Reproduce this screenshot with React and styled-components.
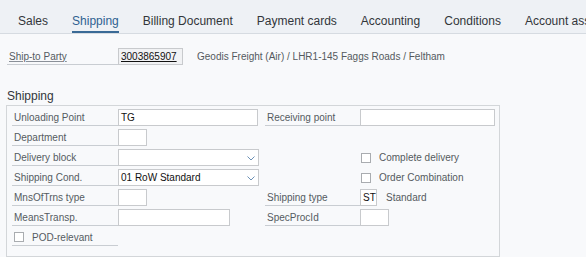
import React from 'react'
import styled, { createGlobalStyle } from 'styled-components'

const GlobalStyle = createGlobalStyle`
  body {
    margin: 0;
    background: #f8f9fb;
    font-family: "Liberation Sans", Arial, sans-serif;
  }
`;

const Page = styled.div`
  width: 586px;
  height: 257px;
  overflow: hidden;
  background: #f8f9fb;
`;

const TabBar = styled.div`
  display: flex;
  gap: 24px;
  height: 34px;
  box-sizing: border-box;
  padding-left: 18px;
  background: #eef1f5;
  border-bottom: 1px solid #d6dbe1;
  white-space: nowrap;
`;

const Tab = styled.div`
  box-sizing: border-box;
  height: 33px;
  padding-top: 14px;
  font-size: 12px;
  line-height: 14px;
  color: ${p => (p.active ? '#2f6191' : '#32363a')};
  border-bottom: 2px solid ${p => (p.active ? '#3a6a96' : 'transparent')};
`;

const ShipToRow = styled.div`
  display: flex;
  align-items: center;
  height: 17px;
  margin-top: 14px;
  padding-left: 7px;
`;

const Label = styled.div`
  box-sizing: border-box;
  width: ${p => p.w}px;
  height: 17px;
  padding-left: 2px;
  font-size: 10px;
  line-height: 17px;
  color: #555b61;
  border-bottom: 1px solid #c9cdd2;
  white-space: nowrap;
  text-decoration: ${p => (p.link ? 'underline' : 'none')};
  text-decoration-color: #8a9098;
  display: flex;
  align-items: center;
  gap: 8px;
`;

const Field = styled.div`
  box-sizing: border-box;
  position: relative;
  width: ${p => p.w}px;
  height: 17px;
  padding-left: 2px;
  font-size: 10px;
  line-height: 15px;
  color: #111;
  background: ${p => (p.readonly ? '#f1f2f4' : '#fff')};
  border: 1px solid #c8cacd;
  white-space: nowrap;
  text-decoration: ${p => (p.link ? 'underline' : 'none')};
`;

const Desc = styled.span`
  margin-left: ${p => p.ml}px;
  font-size: 10px;
  color: #55595e;
  white-space: nowrap;
`;

const GroupTitle = styled.div`
  margin: 24px 0 2px 7px;
  font-size: 12px;
  line-height: 14px;
  color: #32363a;
`;

const Group = styled.div`
  box-sizing: border-box;
  width: 494px;
  margin-left: 6px;
  padding: 3px 0 10px 5px;
  border: 1px solid #d3d6d9;
`;

const FormGrid = styled.div`
  display: grid;
  grid-template-columns: 106px 140px 7px 95px 135px;
  grid-auto-rows: 17px;
  row-gap: 3px;
`;

const Cell = styled.div`
  display: flex;
  align-items: center;
  white-space: nowrap;
`;

const Box = styled.span`
  display: inline-block;
  box-sizing: border-box;
  width: 10px;
  height: 10px;
  margin-left: ${p => p.ml || 0}px;
  background: #fff;
  border: 1px solid #a9acb0;
`;

const CheckText = styled.span`
  margin-left: 8px;
  font-size: 10px;
  color: #55595e;
`;

const Chevron = styled.svg`
  position: absolute;
  right: 3px;
  top: 6px;
`;

const Select = ({ w, value }) => (
  <Field w={w}>
    {value}
    <Chevron width="8" height="5" viewBox="0 0 8 5">
      <polyline points="0.5,0.5 4,4 7.5,0.5" fill="none" stroke="#6d91b6" strokeWidth="1" />
    </Chevron>
  </Field>
)

const tabs = ['Sales', 'Shipping', 'Billing Document', 'Payment cards', 'Accounting', 'Conditions', 'Account assignment']

const App = () => {
  return (
    <Page>
      <GlobalStyle />
      <TabBar>
        {tabs.map(t => (
          <Tab key={t} active={t === 'Shipping'}>{t}</Tab>
        ))}
      </TabBar>

      <ShipToRow>
        <Label w={111} link>Ship-to Party</Label>
        <Field w={65} readonly link>3003865907</Field>
        <Desc ml={14}>Geodis Freight (Air) / LHR1-145 Faggs Roads / Feltham</Desc>
      </ShipToRow>

      <GroupTitle>Shipping</GroupTitle>
      <Group>
        <FormGrid>
          <Label w={106}>Unloading Point</Label>
          <Field w={140}>TG</Field>
          <span />
          <Label w={95}>Receiving point</Label>
          <Field w={135} />

          <Label w={106}>Department</Label>
          <Cell><Field w={29} /></Cell>
          <span />
          <span />
          <span />

          <Label w={106}>Delivery block</Label>
          <Select w={141} />
          <span />
          <span />
          <Cell><Box ml={1} /><CheckText>Complete delivery</CheckText></Cell>

          <Label w={106}>Shipping Cond.</Label>
          <Select w={141} value="01 RoW Standard" />
          <span />
          <span />
          <Cell><Box ml={1} /><CheckText>Order Combination</CheckText></Cell>

          <Label w={106}>MnsOfTrns type</Label>
          <Cell><Field w={29} /></Cell>
          <span />
          <Label w={95}>Shipping type</Label>
          <Cell><Field w={17}>ST</Field><Desc ml={9}>Standard</Desc></Cell>

          <Label w={106}>MeansTransp.</Label>
          <Cell><Field w={112} /></Cell>
          <span />
          <Label w={95}>SpecProcId</Label>
          <Cell><Field w={29} /></Cell>

          <Label w={106}><Box />POD-relevant</Label>
        </FormGrid>
      </Group>
    </Page>
  )
}

export default App
